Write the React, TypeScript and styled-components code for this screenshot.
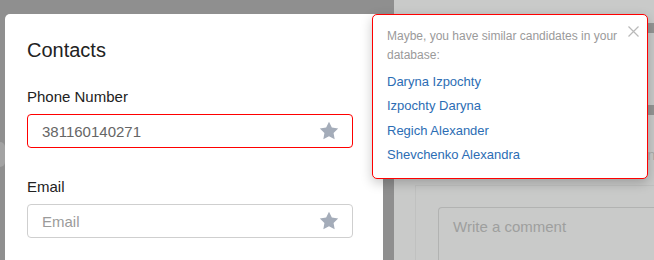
import React from "react";
import styled, { createGlobalStyle } from "styled-components";

const Global = createGlobalStyle`
  html, body { margin: 0; padding: 0; }
  body { font-family: "Liberation Sans", Arial, sans-serif; background: #8f8f8f; }
  * { box-sizing: border-box; }
`;

const Page = styled.div`
  position: relative;
  display: flex;
  width: 654px;
  height: 260px;
  overflow: hidden;
  background: #8f8f8f;
`;

const Gutter = styled.div`
  width: 5px;
  flex: none;
  padding-top: 142px;
`;

const GutterKnob = styled.div`
  width: 5px;
  height: 25px;
  border-radius: 0 12px 12px 0;
  background: #a3a3a3;
`;

const Modal = styled.section`
  width: 378px;
  flex: none;
  margin-top: 14px;
  background: #fff;
  border-radius: 5px 5px 0 0;
  padding: 25px 30px 0 22px;
  display: flex;
  flex-direction: column;
`;

const Title = styled.h2`
  margin: 0 0 26px;
  font-size: 20px;
  font-weight: 400;
  line-height: 23px;
  color: #222;
`;

const Field = styled.div<{ $gap?: number }>`
  display: flex;
  flex-direction: column;
  margin-bottom: ${(p) => p.$gap ?? 0}px;
`;

const Label = styled.label`
  font-size: 15px;
  line-height: 17px;
  color: #222;
  margin-bottom: 9px;
`;

const InputBox = styled.div<{ $error?: boolean }>`
  display: flex;
  align-items: center;
  height: 34px;
  border: 1px solid ${(p) => (p.$error ? "#ff0000" : "#cfcfcf")};
  border-radius: 4px;
  padding: 0 12px 0 14px;
`;

const InputText = styled.span<{ $placeholder?: boolean }>`
  flex: 1;
  font-size: 15px;
  color: ${(p) => (p.$placeholder ? "#9b9b9b" : "#666")};
`;

const StarIcon = () => (
  <svg width="22" height="22" viewBox="0 0 24 24" aria-hidden="true">
    <path
      d="M12 2l3.09 6.26L22 9.27l-5 4.87 1.18 6.88L12 17.77l-6.18 3.25L7 14.14 2 9.27l6.91-1.01L12 2z"
      fill="#a4acb9"
    />
  </svg>
);

const RightPane = styled.div`
  flex: 1;
  margin-left: 11px;
  background: #c9cac9;
  display: flex;
  flex-direction: column;
  padding-top: 23px;
`;

const Bar = styled.div<{ $mt?: number }>`
  height: 10px;
  margin-top: ${(p) => p.$mt ?? 0}px;
  background: #949594;
`;

const FaintText = styled.div`
  margin: 31px 0 0 249px;
  font-size: 15px;
  line-height: 17px;
  color: #a9aaa9;
  white-space: nowrap;
`;

const CommentPanel = styled.div`
  margin: 22px 0 0 21px;
  flex: 1;
  border-top: 1px solid #c0c1c0;
  border-left: 1px solid #c0c1c0;
  padding: 21px 0 0 22px;
  display: flex;
`;

const CommentBox = styled.div`
  flex: 1;
  border: 1px solid #b2b3b2;
  border-right: none;
  border-bottom: none;
  border-radius: 4px 0 0 0;
  padding: 9px 14px;
  font-size: 15px;
  line-height: 20px;
  color: #9e9f9e;
`;

const Popover = styled.div`
  position: absolute;
  left: 372px;
  top: 14px;
  width: 276px;
  height: 165px;
  background: #fff;
  border: 1px solid #ff0000;
  border-radius: 5px;
  box-shadow: 0 4px 12px rgba(0, 0, 0, 0.22);
  padding: 12px 14px 0 14px;
`;

const CloseButton = styled.button`
  position: absolute;
  top: 10px;
  right: 8px;
  width: 12px;
  height: 12px;
  padding: 0;
  border: none;
  background: none;
  display: flex;
  align-items: center;
  justify-content: center;
`;

const Hint = styled.p`
  margin: 0 0 5px;
  font-size: 12px;
  line-height: 19px;
  color: #9a9a9a;
  padding-right: 8px;
`;

const CandidateList = styled.ul`
  list-style: none;
  margin: 0;
  padding: 0;
`;

const Candidate = styled.li`
  font-size: 13px;
  line-height: 24.3px;
  color: #2c6db4;
`;

const candidates = [
  "Daryna Izpochty",
  "Izpochty Daryna",
  "Regich Alexander",
  "Shevchenko Alexandra",
];

export default function App() {
  return (
    <>
      <Global />
      <Page>
        <Gutter>
          <GutterKnob />
        </Gutter>
        <Modal>
          <Title>Contacts</Title>
          <Field $gap={30}>
            <Label>Phone Number</Label>
            <InputBox $error>
              <InputText>381160140271</InputText>
              <StarIcon />
            </InputBox>
          </Field>
          <Field>
            <Label>Email</Label>
            <InputBox>
              <InputText $placeholder>Email</InputText>
              <StarIcon />
            </InputBox>
          </Field>
        </Modal>
        <RightPane>
          <Bar />
          <Bar $mt={72} />
          <FaintText>Info</FaintText>
          <CommentPanel>
            <CommentBox>Write a comment</CommentBox>
          </CommentPanel>
        </RightPane>
        <Popover>
          <CloseButton aria-label="Close">
            <svg width="11" height="11" viewBox="0 0 11 11">
              <path d="M0.5 0.5L10.5 10.5M10.5 0.5L0.5 10.5" stroke="#b9b9b9" strokeWidth="1.2" />
            </svg>
          </CloseButton>
          <Hint>Maybe, you have similar candidates in your database:</Hint>
          <CandidateList>
            {candidates.map((c) => (
              <Candidate key={c}>{c}</Candidate>
            ))}
          </CandidateList>
        </Popover>
      </Page>
    </>
  );
}
